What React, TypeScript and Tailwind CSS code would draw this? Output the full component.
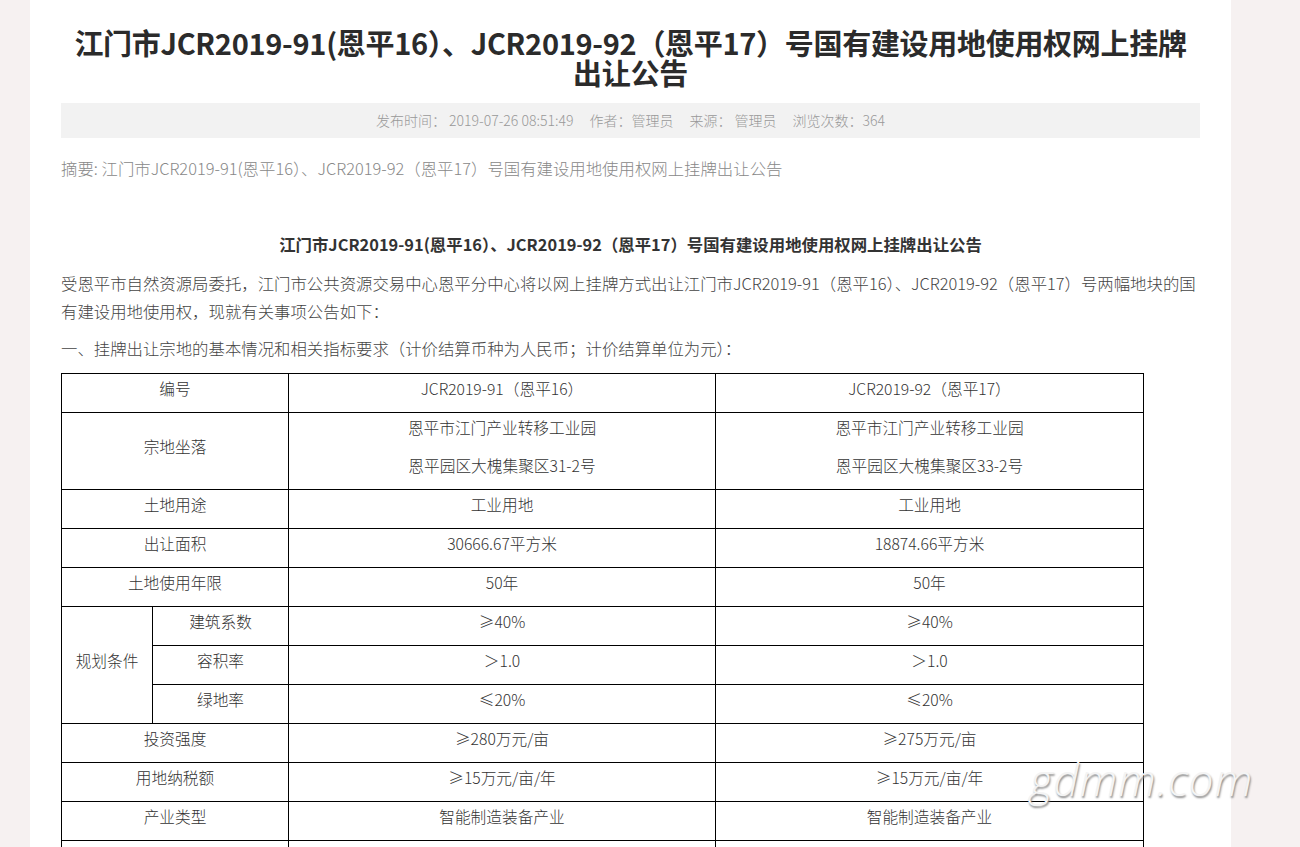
const font = { fontFamily: '"Noto Sans CJK SC", "Noto Sans", sans-serif' };

type Row = { label: string; a: string[]; b: string[] };

const rows: Row[] = [
  { label: '编号', a: ['JCR2019-91（恩平16）'], b: ['JCR2019-92（恩平17）'] },
  {
    label: '宗地坐落',
    a: ['恩平市江门产业转移工业园', '恩平园区大槐集聚区31-2号'],
    b: ['恩平市江门产业转移工业园', '恩平园区大槐集聚区33-2号'],
  },
  { label: '土地用途', a: ['工业用地'], b: ['工业用地'] },
  { label: '出让面积', a: ['30666.67平方米'], b: ['18874.66平方米'] },
  { label: '土地使用年限', a: ['50年'], b: ['50年'] },
];

const planning = [
  { label: '建筑系数', a: '≥40%', b: '≥40%' },
  { label: '容积率', a: '＞1.0', b: '＞1.0' },
  { label: '绿地率', a: '≤20%', b: '≤20%' },
];

const rowsAfter: Row[] = [
  { label: '投资强度', a: ['≥280万元/亩'], b: ['≥275万元/亩'] },
  { label: '用地纳税额', a: ['≥15万元/亩/年'], b: ['≥15万元/亩/年'] },
  { label: '产业类型', a: ['智能制造装备产业'], b: ['智能制造装备产业'] },
];

const base = 'border border-black text-center font-light text-[15.7px] text-[#333]';
const tdTop = `${base} align-top`;
const tdMid = `${base} align-middle pb-2`;

function Cell({ lines }: { lines: string[] }) {
  return (
    <td className={tdTop}>
      {lines.map((l) => (
        <div key={l} className="h-[38px] leading-[30px]">
          {l}
        </div>
      ))}
    </td>
  );
}

function PlainRow({ r }: { r: Row }) {
  return (
    <tr>
      <td colSpan={2} className={r.a.length > 1 ? tdMid : tdTop}>
        <div className="leading-[30px]">{r.label}</div>
      </td>
      <Cell lines={r.a} />
      <Cell lines={r.b} />
    </tr>
  );
}

export default function App() {
  return (
    <div className="min-h-screen bg-[#f6f1f1] relative overflow-hidden" style={font}>
      <div className="ml-[30px] w-[1201px] bg-white px-[31px] pt-[27px] pb-10 min-h-[900px]">
        <h1 className="text-center font-bold text-[29px] leading-[30px] text-[#2b2b2b] tracking-[-0.3px]">
          江门市JCR2019-91(恩平16）、JCR2019-92（恩平17）号国有建设用地使用权网上挂牌
          <br />
          出让公告
        </h1>
        <div className="mt-[16px] h-[35px] bg-[#f2f2f2] flex items-center justify-center text-[14px] font-light text-[#999] gap-[16px]">
          <span>发布时间： 2019-07-26 08:51:49</span>
          <span>作者：管理员</span>
          <span>来源： 管理员</span>
          <span>浏览次数：364</span>
        </div>
        <p className="mt-[18px] text-[16.4px] font-light text-[#888] leading-[24px]">
          摘要: 江门市JCR2019-91(恩平16）、JCR2019-92（恩平17）号国有建设用地使用权网上挂牌出让公告
        </p>
        <div className="mt-[50px] text-[16.4px] text-[#444] font-light leading-[28px]">
          <p className="text-center font-bold text-[#333]">
            江门市JCR2019-91(恩平16）、JCR2019-92（恩平17）号国有建设用地使用权网上挂牌出让公告
          </p>
          <p className="mt-[11px]">
            受恩平市自然资源局委托，江门市公共资源交易中心恩平分中心将以网上挂牌方式出让江门市JCR2019-91（恩平16）、JCR2019-92（恩平17）号两幅地块的国有建设用地使用权，现就有关事项公告如下：
          </p>
          <p className="mt-[9px]">一、挂牌出让宗地的基本情况和相关指标要求（计价结算币种为人民币；计价结算单位为元）：</p>
        </div>
        <table className="mt-[11px] w-[1082px] border-collapse table-fixed">
          <colgroup>
            <col className="w-[91px]" />
            <col className="w-[136px]" />
            <col className="w-[427px]" />
            <col className="w-[428px]" />
          </colgroup>
          <tbody>
            {rows.map((r) => (
              <PlainRow key={r.label} r={r} />
            ))}
            {planning.map((p, i) => (
              <tr key={p.label}>
                {i === 0 && (
                  <td rowSpan={3} className={tdMid}>
                    规划条件
                  </td>
                )}
                <Cell lines={[p.label]} />
                <Cell lines={[p.a]} />
                <Cell lines={[p.b]} />
              </tr>
            ))}
            {rowsAfter.map((r) => (
              <PlainRow key={r.label} r={r} />
            ))}
            <tr className="h-[39px]">
              <td colSpan={2} className={tdTop} />
              <td className={tdTop} />
              <td className={tdTop} />
            </tr>
          </tbody>
        </table>
      </div>
      <div
        className="absolute left-[1030px] top-[746px] text-[44px] italic font-light text-[#f4f4f4] tracking-[1px]"
        style={{ fontFamily: '"Open Sans", sans-serif', textShadow: '1px 2px 2px #8a8a8a' }}
      >
        gdmm.com
      </div>
    </div>
  );
}
